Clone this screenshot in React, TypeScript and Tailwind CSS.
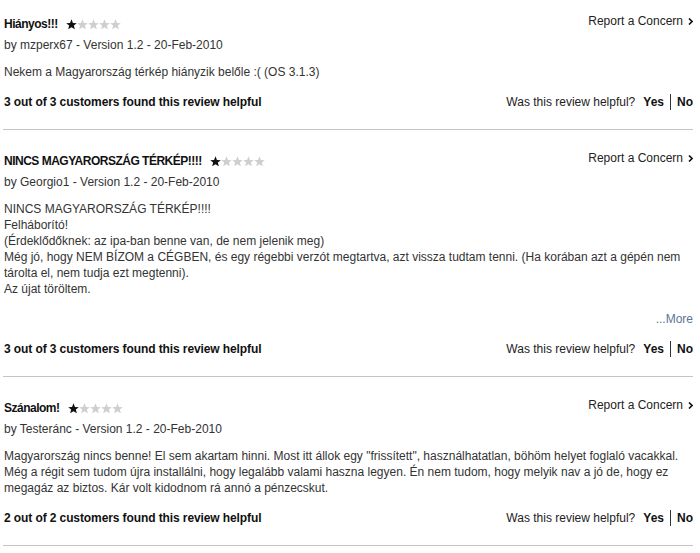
import React from "react";

function Stars() {
  const star = "M5.5 0.3l1.45 3.6 3.85.25-2.95 2.45 1 3.75-3.35-2.1-3.35 2.1 1-3.75L.2 4.15l3.85-.25z";
  return (
    <span className="ml-[8px] inline-flex gap-[0px] align-[-1px]">
      {[0, 1, 2, 3, 4].map((i) => (
        <svg key={i} width="11" height="11" viewBox="0 0 11 11">
          <path d={star} fill={i === 0 ? "#111" : "#cfcfcf"} />
        </svg>
      ))}
    </span>
  );
}

function Review({
  title,
  by,
  body,
  more,
  helpful,
  first,
}: {
  title: string;
  by: string;
  body: React.ReactNode;
  more?: boolean;
  helpful: string;
  first?: boolean;
}) {
  return (
    <div className={first ? "pt-[16px]" : "pt-[23px]"}>
      <div className="flex items-start justify-between pl-[4px] pr-[7px]">
        <div className="flex items-center text-[12px] leading-[16px] font-bold text-[#111]">
          <span className="tracking-[-0.5px]">{title}</span>
          <Stars />
        </div>
        <div className="flex items-center text-[12px] leading-[16px] text-[#222] mt-[-3px]">
          Report a Concern
          <svg className="ml-[5px]" width="5" height="7" viewBox="0 0 5 7">
            <path d="M1 0.5L4 3.5L1 6.5" stroke="#111" strokeWidth="1.6" fill="none" />
          </svg>
        </div>
      </div>
      <div className="mt-[5px] pl-[4px] text-[12px] leading-[16px] text-[#333]">{by}</div>
      <div className="mt-[11px] pl-[4px] w-[694px] text-[12px] leading-[16px] text-[#333]">{body}</div>
      {more && (
        <div className="mt-[14px] pr-[7px] text-right text-[12px] leading-[16px] text-[#5b7693]">...More</div>
      )}
      <div className="mt-[14px] flex items-center justify-between pl-[4px] pr-[7px] text-[12px] leading-[16px]">
        <div className="font-bold text-[#111] tracking-[-0.1px]">{helpful}</div>
        <div className="flex items-center text-[#222]">
          <span>Was this review helpful?</span>
          <span className="ml-[8px] font-bold text-[#111]">Yes</span>
          <span className="mx-[6px] h-[16px] w-px bg-[#333]" />
          <span className="font-bold text-[#111]">No</span>
        </div>
      </div>
      <div className="mt-[19px] ml-[3px] w-[690px] h-px bg-[#c4c4c4]" />
    </div>
  );
}

export default function App() {
  return (
    <div
      className="w-[700px] h-[553px] bg-white overflow-hidden"
      style={{ fontFamily: '"Liberation Sans", Arial, sans-serif' }}
    >
      <Review
        first
        title="Hiányos!!!"
        by="by mzperx67 - Version 1.2 - 20-Feb-2010"
        body="Nekem a Magyarország térkép hiányzik belőle :( (OS 3.1.3)"
        helpful="3 out of 3 customers found this review helpful"
      />
      <Review
        title="NINCS MAGYARORSZÁG TÉRKÉP!!!!"
        by="by Georgio1 - Version 1.2 - 20-Feb-2010"
        body={
          <>
            NINCS MAGYARORSZÁG TÉRKÉP!!!!
            <br />
            Felháborító!
            <br />
            (Érdeklődőknek: az ipa-ban benne van, de nem jelenik meg)
            <br />
            Még jó, hogy NEM BÍZOM a CÉGBEN, és egy régebbi verzót megtartva, azt vissza tudtam tenni. (Ha korában azt a gépén nem tárolta el, nem tudja ezt megtenni).
            <br />
            Az újat töröltem.
          </>
        }
        more
        helpful="3 out of 3 customers found this review helpful"
      />
      <Review
        title="Szánalom!"
        by="by Testeránc - Version 1.2 - 20-Feb-2010"
        body={'Magyarország nincs benne! El sem akartam hinni. Most itt állok egy "frissített", használhatatlan, böhöm helyet foglaló vacakkal. Még a régit sem tudom újra installálni, hogy legalább valami haszna legyen. Én nem tudom, hogy melyik nav a jó de, hogy ez megagáz az biztos. Kár volt kidodnom rá annó a pénzecskut.'}
        helpful="2 out of 2 customers found this review helpful"
      />
    </div>
  );
}
